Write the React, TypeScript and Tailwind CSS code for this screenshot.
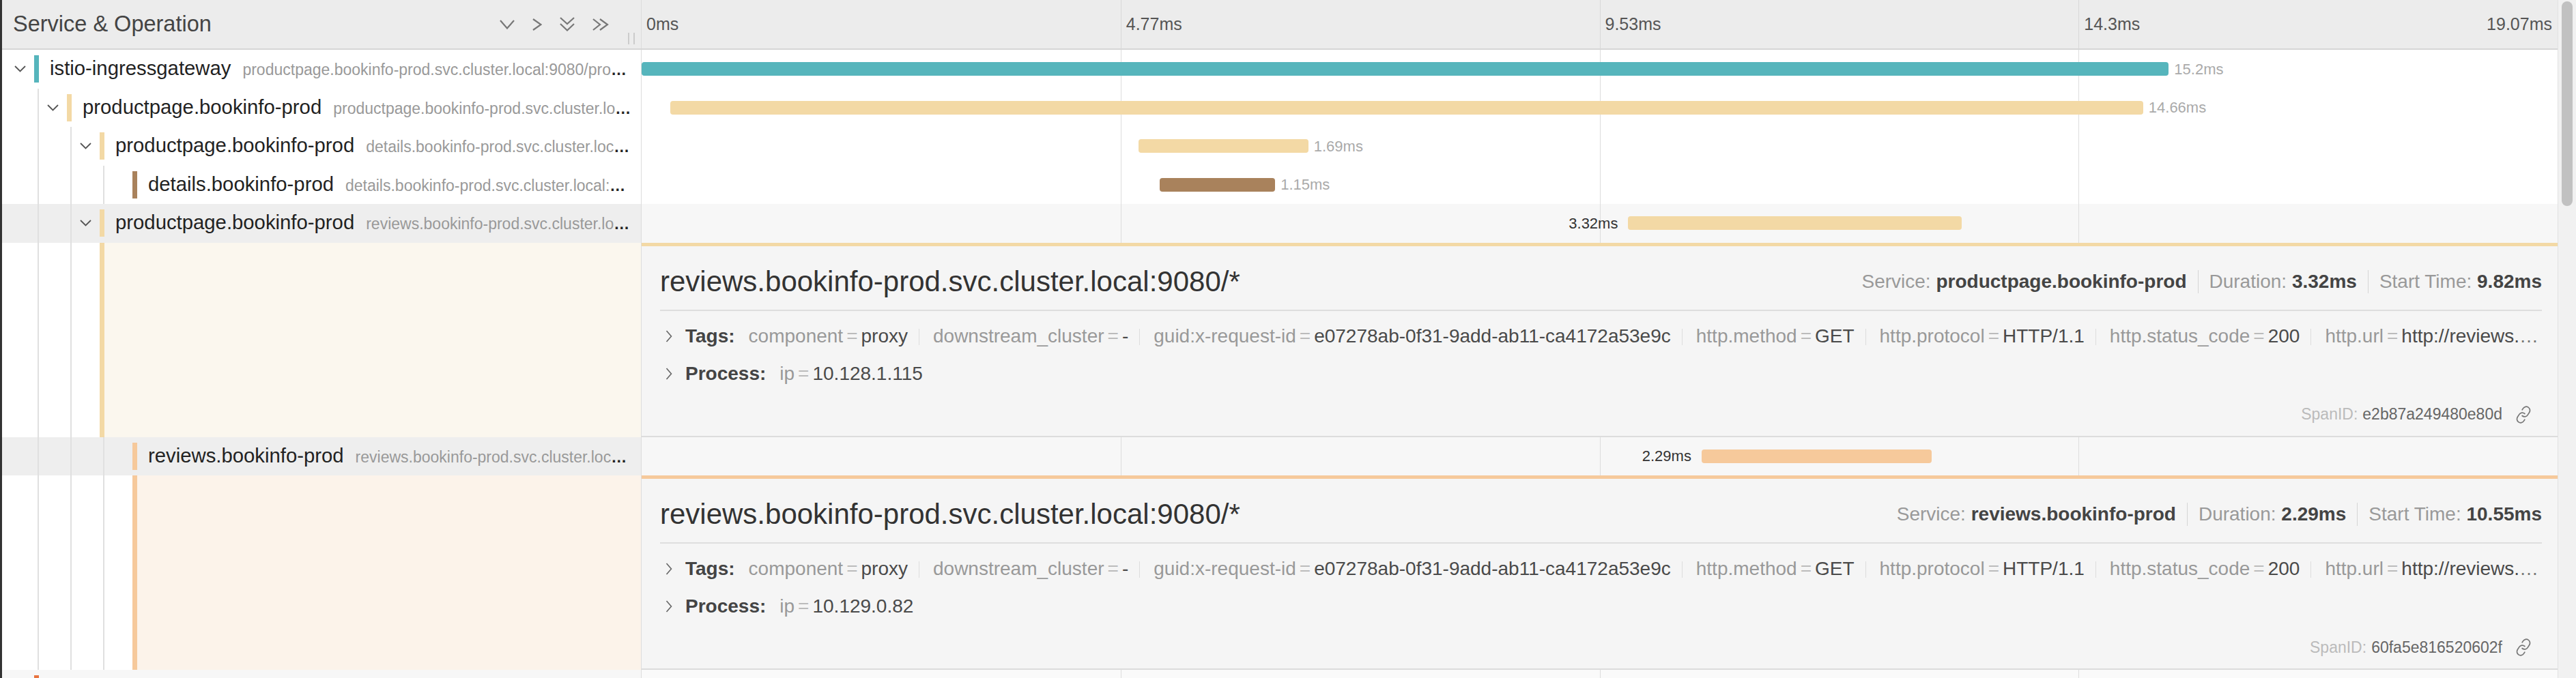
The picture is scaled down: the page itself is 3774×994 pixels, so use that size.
import React from "react";
import { Link } from "lucide-react";

const TOTAL_MS = 19.07;

type Detail = {
  title: string;
  service: string;
  duration: string;
  start: string;
  ip: string;
  spanId: string;
  cream: string;
  topBorder: string;
};

type Row = {
  depth: number;
  name: string;
  endpoint: string;
  color: string;
  start: number;
  dur: number;
  label: string;
  toggle: boolean;
  open?: boolean;
  labelLeft?: boolean;
  detail?: Detail;
};

const rows: Row[] = [
  {
    depth: 0,
    name: "istio-ingressgateway",
    endpoint: "productpage.bookinfo-prod.svc.cluster.local:9080/productpage",
    color: "bg-[#56b5bc]",
    start: 0,
    dur: 15.2,
    label: "15.2ms",
    toggle: true,
  },
  {
    depth: 1,
    name: "productpage.bookinfo-prod",
    endpoint: "productpage.bookinfo-prod.svc.cluster.local:9080/productpage",
    color: "bg-[#f3d9a5]",
    start: 0.285,
    dur: 14.66,
    label: "14.66ms",
    toggle: true,
  },
  {
    depth: 2,
    name: "productpage.bookinfo-prod",
    endpoint: "details.bookinfo-prod.svc.cluster.local:9080/*",
    color: "bg-[#f3d9a5]",
    start: 4.946,
    dur: 1.69,
    label: "1.69ms",
    toggle: true,
  },
  {
    depth: 3,
    name: "details.bookinfo-prod",
    endpoint: "details.bookinfo-prod.svc.cluster.local:9080/*",
    color: "bg-[#a9825c]",
    start: 5.156,
    dur: 1.15,
    label: "1.15ms",
    toggle: false,
  },
  {
    depth: 2,
    name: "productpage.bookinfo-prod",
    endpoint: "reviews.bookinfo-prod.svc.cluster.local:9080/*",
    color: "bg-[#f3d9a5]",
    start: 9.82,
    dur: 3.32,
    label: "3.32ms",
    toggle: true,
    open: true,
    labelLeft: true,
    detail: {
      title: "reviews.bookinfo-prod.svc.cluster.local:9080/*",
      service: "productpage.bookinfo-prod",
      duration: "3.32ms",
      start: "9.82ms",
      ip: "10.128.1.115",
      spanId: "e2b87a249480e80d",
      cream: "bg-[#fbf7ee]",
      topBorder: "border-t-[#f3d9a5]",
    },
  },
  {
    depth: 3,
    name: "reviews.bookinfo-prod",
    endpoint: "reviews.bookinfo-prod.svc.cluster.local:9080/*",
    color: "bg-[#f6c99b]",
    start: 10.55,
    dur: 2.29,
    label: "2.29ms",
    toggle: false,
    open: true,
    labelLeft: true,
    detail: {
      title: "reviews.bookinfo-prod.svc.cluster.local:9080/*",
      service: "reviews.bookinfo-prod",
      duration: "2.29ms",
      start: "10.55ms",
      ip: "10.129.0.82",
      spanId: "60fa5e816520602f",
      cream: "bg-[#fcf3ea]",
      topBorder: "border-t-[#f6c99b]",
    },
  },
];

const tags: [string, string][] = [
  ["component", "proxy"],
  ["downstream_cluster", "-"],
  ["guid:x-request-id", "e07278ab-0f31-9add-ab11-ca4172a53e9c"],
  ["http.method", "GET"],
  ["http.protocol", "HTTP/1.1"],
  ["http.status_code", "200"],
  ["http.url", "http://reviews.bookinfo-prod.svc.cluster.local:9080/reviews/0"],
];

const ticks = ["0ms", "4.77ms", "9.53ms", "14.3ms"];

function Guides({ depth }: { depth: number }) {
  return (
    <>
      {Array.from({ length: depth }).map((_, i) => (
        <div key={i} className="w-[48px] h-full shrink-0 border-r-2 border-[#e0e0e0]" />
      ))}
    </>
  );
}

function RowChevron() {
  return (
    <svg width="17" height="10" viewBox="0 0 17 10" fill="none">
      <polyline points="1,1 8.5,8.5 16,1" stroke="#555" strokeWidth="1.8" />
    </svg>
  );
}

function SmallRight() {
  return (
    <svg width="10" height="18" viewBox="0 0 10 18" fill="none">
      <polyline points="1.5,1 8.5,9 1.5,17" stroke="#666" strokeWidth="1.6" />
    </svg>
  );
}

function GridLines() {
  return (
    <div className="absolute inset-0 grid grid-cols-4">
      <div />
      <div className="border-l border-[#ddd]" />
      <div className="border-l border-[#ddd]" />
      <div className="border-l border-[#ddd]" />
    </div>
  );
}

function SpanRow({ row }: { row: Row }) {
  const left = (row.start / TOTAL_MS) * 100;
  const width = (row.dur / TOTAL_MS) * 100;
  return (
    <div className="flex h-[56.5px]">
      <div
        className={`w-[937px] shrink-0 flex items-center h-full pl-[6px] pr-[14px] border-r border-[#ddd] ${
          row.open ? "bg-[#eeeeee]" : "bg-white"
        }`}
      >
        <Guides depth={row.depth} />
        <div className="w-[41px] shrink-0 flex justify-center">{row.toggle && <RowChevron />}</div>
        <div className={`w-[7px] h-[40px] shrink-0 ${row.color}`} />
        <div className="flex-1 min-w-0 pl-[16px] truncate text-[#222] text-[23px] leading-[40px] font-bold">
          <span className="text-[29.3px] font-normal">{row.name}</span>
          <span className="ml-[17px] font-normal text-[#999]">{row.endpoint}</span>
        </div>
      </div>
      <div className={`relative flex-1 h-full ${row.open ? "bg-[#f7f7f7]" : "bg-white"}`}>
        <GridLines />
        <div
          className="absolute top-[18px] h-[20px] flex items-center"
          style={{ left: `${left}%`, width: `${width}%` }}
        >
          {row.labelLeft && (
            <span className="absolute right-full mr-[15px] text-[22px] text-[#333] whitespace-nowrap">
              {row.label}
            </span>
          )}
          <div className={`w-full h-full rounded-[4px] ${row.color}`} />
          {!row.labelLeft && (
            <span className="absolute left-full ml-[8px] text-[22px] text-[#aaa] whitespace-nowrap">
              {row.label}
            </span>
          )}
        </div>
      </div>
    </div>
  );
}

function Sep() {
  return <span className="inline-block w-px h-[34px] bg-[#d5d5d5] mx-[16px] align-middle" />;
}

function DetailRow({ row }: { row: Row }) {
  const d = row.detail!;
  return (
    <div className="flex h-[285px]">
      <div className="w-[937px] shrink-0 flex h-full border-r border-[#ddd] pl-[6px] bg-white">
        <Guides depth={row.depth} />
        <div className="w-[41px] shrink-0" />
        <div className={`w-[7px] shrink-0 ${row.color}`} />
        <div className={`flex-1 ${d.cream}`} />
      </div>
      <div
        className={`flex-1 min-w-0 flex flex-col bg-[#f5f5f5] border-t-[5px] ${d.topBorder} border-b-2 border-b-[#dcdcdc] pl-[27px] pr-[23px] text-[28px]`}
      >
        <div className="h-[95px] shrink-0 pt-[11px] flex items-center justify-between border-b-2 border-[#dedede]">
          <h2 className="text-[42px] leading-none text-[#333]">{d.title}</h2>
          <div className="flex items-center text-[#999] whitespace-nowrap">
            <span>
              Service: <b className="text-[#444]">{d.service}</b>
            </span>
            <Sep />
            <span>
              Duration: <b className="text-[#444]">{d.duration}</b>
            </span>
            <Sep />
            <span>
              Start Time: <b className="text-[#444]">{d.start}</b>
            </span>
          </div>
        </div>
        <div className="mt-[19px] h-[36px] shrink-0 flex items-center">
          <div className="w-[37px] shrink-0 pl-[8px] flex items-center">
            <SmallRight />
          </div>
          <b className="text-[#444] shrink-0">Tags:</b>
          <div className="flex-1 min-w-0 truncate leading-[36px] text-[#777]">
            {tags.map(([k, v], i) => (
              <React.Fragment key={k}>
                {i > 0 && <span className="inline-block w-px h-[24px] bg-[#ddd] ml-[16px] align-[-4px]" />}
                <span className="ml-[20px] text-[#999]">{k}</span>
                <span className="px-[5px] text-[#bbb]">=</span>
                <span className="text-[#4a4a4a]">{v}</span>
              </React.Fragment>
            ))}
          </div>
        </div>
        <div className="mt-[19px] h-[36px] shrink-0 flex items-center">
          <div className="w-[37px] shrink-0 pl-[8px] flex items-center">
            <SmallRight />
          </div>
          <b className="text-[#444]">Process:</b>
          <span className="ml-[20px] text-[#999]">ip</span>
          <span className="px-[5px] text-[#bbb]">=</span>
          <span className="text-[#4a4a4a]">{d.ip}</span>
        </div>
        <div className="mt-[24px] h-[36px] shrink-0 flex items-center justify-end text-[23px]">
          <span className="text-[#bbb]">SpanID:</span>
          <span className="ml-[7px] text-[#666]">{d.spanId}</span>
          <Link size={26} strokeWidth={1.6} className="ml-[18px] mr-[14px] text-[#777] -rotate-12" />
        </div>
      </div>
    </div>
  );
}

function HeaderIcons() {
  return (
    <div className="flex items-center gap-[26px] text-[#777]">
      <svg width="22" height="14" viewBox="0 0 22 14" fill="none">
        <polyline points="1,1 11,12.5 21,1" stroke="#777" strokeWidth="2.2" />
      </svg>
      <svg width="14" height="18" viewBox="0 0 14 18" fill="none">
        <polyline points="1,1 12.5,9 1,17" stroke="#777" strokeWidth="2.2" />
      </svg>
      <svg width="22" height="21" viewBox="0 0 22 21" fill="none">
        <polyline points="1,1 11,10 21,1" stroke="#777" strokeWidth="2.2" />
        <polyline points="1,10 11,19.5 21,10" stroke="#777" strokeWidth="2.2" />
      </svg>
      <svg width="24" height="18" viewBox="0 0 24 18" fill="none">
        <polyline points="1,1 11,9 1,17" stroke="#777" strokeWidth="2.2" />
        <polyline points="11,1 22,9 11,17" stroke="#777" strokeWidth="2.2" />
      </svg>
    </div>
  );
}

export default function App() {
  return (
    <div className="flex w-full h-[994px] overflow-hidden bg-white border-l-[3px] border-[#333] font-['Liberation_Sans',Arial,sans-serif]">
      <div className="flex-1 min-w-0 flex flex-col">
        <div className="flex h-[73px] shrink-0 bg-[#ececec] border-b-2 border-[#d6d6d6]">
          <div className="relative w-[937px] shrink-0 flex items-center justify-between pl-[16px] pr-[47px] border-r border-[#dcdcdc]">
            <span className="text-[32.5px] text-[#444]">Service &amp; Operation</span>
            <HeaderIcons />
            <div className="absolute right-[9px] top-[48px] flex gap-[6px]">
              <div className="w-[2px] h-[17px] bg-[#ccc]" />
              <div className="w-[2px] h-[17px] bg-[#ccc]" />
            </div>
          </div>
          <div className="flex-1 grid grid-cols-4 text-[25px] text-[#555]">
            {ticks.map((t, i) => (
              <div
                key={t}
                className={`flex items-center justify-between pl-[7px] pr-[8px] ${i > 0 ? "border-l border-[#d8d8d8]" : ""}`}
              >
                <span>{t}</span>
                {i === 3 && <span>19.07ms</span>}
              </div>
            ))}
          </div>
        </div>
        {rows.map((row, i) => (
          <React.Fragment key={i}>
            <SpanRow row={row} />
            {row.open && row.detail && <DetailRow row={row} />}
          </React.Fragment>
        ))}
        <div className="flex flex-1">
          <div className="w-[937px] shrink-0 flex pl-[6px] border-r border-[#ddd] bg-[#f7f7f7]">
            <div className="w-[41px] shrink-0" />
            <div className="w-[7px] mt-[8px] bg-[#e8743f]" />
          </div>
          <div className="relative flex-1 bg-[#fafafa]">
            <GridLines />
          </div>
        </div>
      </div>
      <div className="w-[27px] shrink-0 bg-[#f1f1f1] border-l border-[#e2e2e2] px-[5px] pt-[2px]">
        <div className="h-[300px] rounded-full bg-[#c1c1c1]" />
      </div>
    </div>
  );
}
